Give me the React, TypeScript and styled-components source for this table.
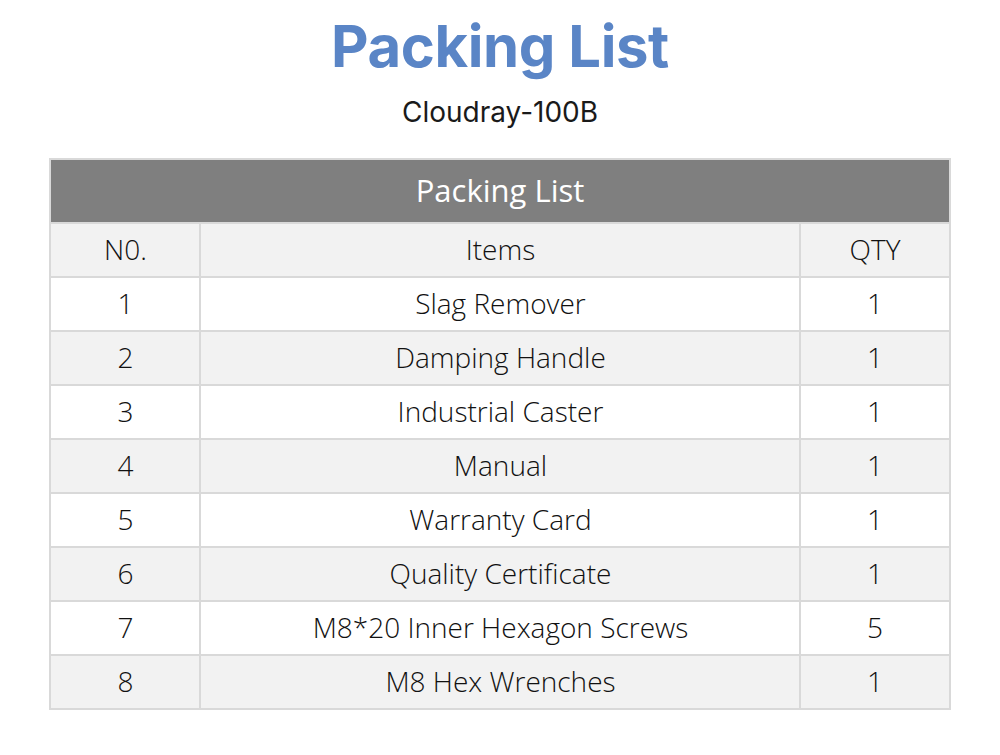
import React from 'react';
import styled, { createGlobalStyle } from 'styled-components';

const GlobalStyle = createGlobalStyle`
    html, body {
        margin: 0;
        padding: 0;
        background: #ffffff;
    }
    body {
        font-family: "Open Sans", "Noto Sans", sans-serif;
    }
`;

const Page = styled.div`
    width: 1000px;
    height: 755px;
    display: flex;
    flex-direction: column;
    align-items: center;
    overflow: hidden;
`;

const Title = styled.h1`
    margin: 12px 0 0;
    font-family: Inter, "Liberation Sans", sans-serif;
    font-weight: 700;
    font-size: 58px;
    line-height: 68px;
    color: #5a85c6;
    letter-spacing: -0.4px;
`;

const Subtitle = styled.div`
    margin-top: 12px;
    font-family: Inter, "Liberation Sans", sans-serif;
    font-size: 28px;
    line-height: 40px;
    color: #1a1a1a;
`;

const Table = styled.table`
    margin-top: 26px;
    width: 899px;
    border-collapse: collapse;
    table-layout: fixed;
    border: 2px solid #d9d9d9;
`;

const HeadCell = styled.th`
    height: 60px;
    padding: 0 0 2px;
    background: #7f7f7f;
    color: #ffffff;
    font-weight: 400;
    font-size: 31px;
    border: 2px solid #d9d9d9;
`;

const Row = styled.tr<{ $shaded: boolean }>`
    background: ${(p) => (p.$shaded ? '#f2f2f2' : '#ffffff')};
`;

const Cell = styled.td`
    height: 49px;
    padding: 0 0 3px;
    text-align: center;
    font-weight: 300;
    font-size: 28px;
    color: #111111;
    border: 2px solid #d9d9d9;
`;

const items: [string, string, string][] = [
    ['1', 'Slag Remover', '1'],
    ['2', 'Damping Handle', '1'],
    ['3', 'Industrial Caster', '1'],
    ['4', 'Manual', '1'],
    ['5', 'Warranty Card', '1'],
    ['6', 'Quality Certificate', '1'],
    ['7', 'M8*20 Inner Hexagon Screws', '5'],
    ['8', 'M8 Hex Wrenches', '1'],
];

const App: React.FC = () => {
    return (
        <Page>
            <GlobalStyle />
            <Title>Packing List</Title>
            <Subtitle>Cloudray-100B</Subtitle>
            <Table>
                <colgroup>
                    <col style={{ width: 150 }} />
                    <col style={{ width: 600 }} />
                    <col style={{ width: 149 }} />
                </colgroup>
                <thead>
                    <tr>
                        <HeadCell colSpan={3}>Packing List</HeadCell>
                    </tr>
                </thead>
                <tbody>
                    <Row $shaded>
                        <Cell>N0.</Cell>
                        <Cell>Items</Cell>
                        <Cell>QTY</Cell>
                    </Row>
                    {items.map(([no, name, qty], i) => (
                        <Row key={no} $shaded={i % 2 === 1}>
                            <Cell>{no}</Cell>
                            <Cell>{name}</Cell>
                            <Cell>{qty}</Cell>
                        </Row>
                    ))}
                </tbody>
            </Table>
        </Page>
    );
};

export default App;
